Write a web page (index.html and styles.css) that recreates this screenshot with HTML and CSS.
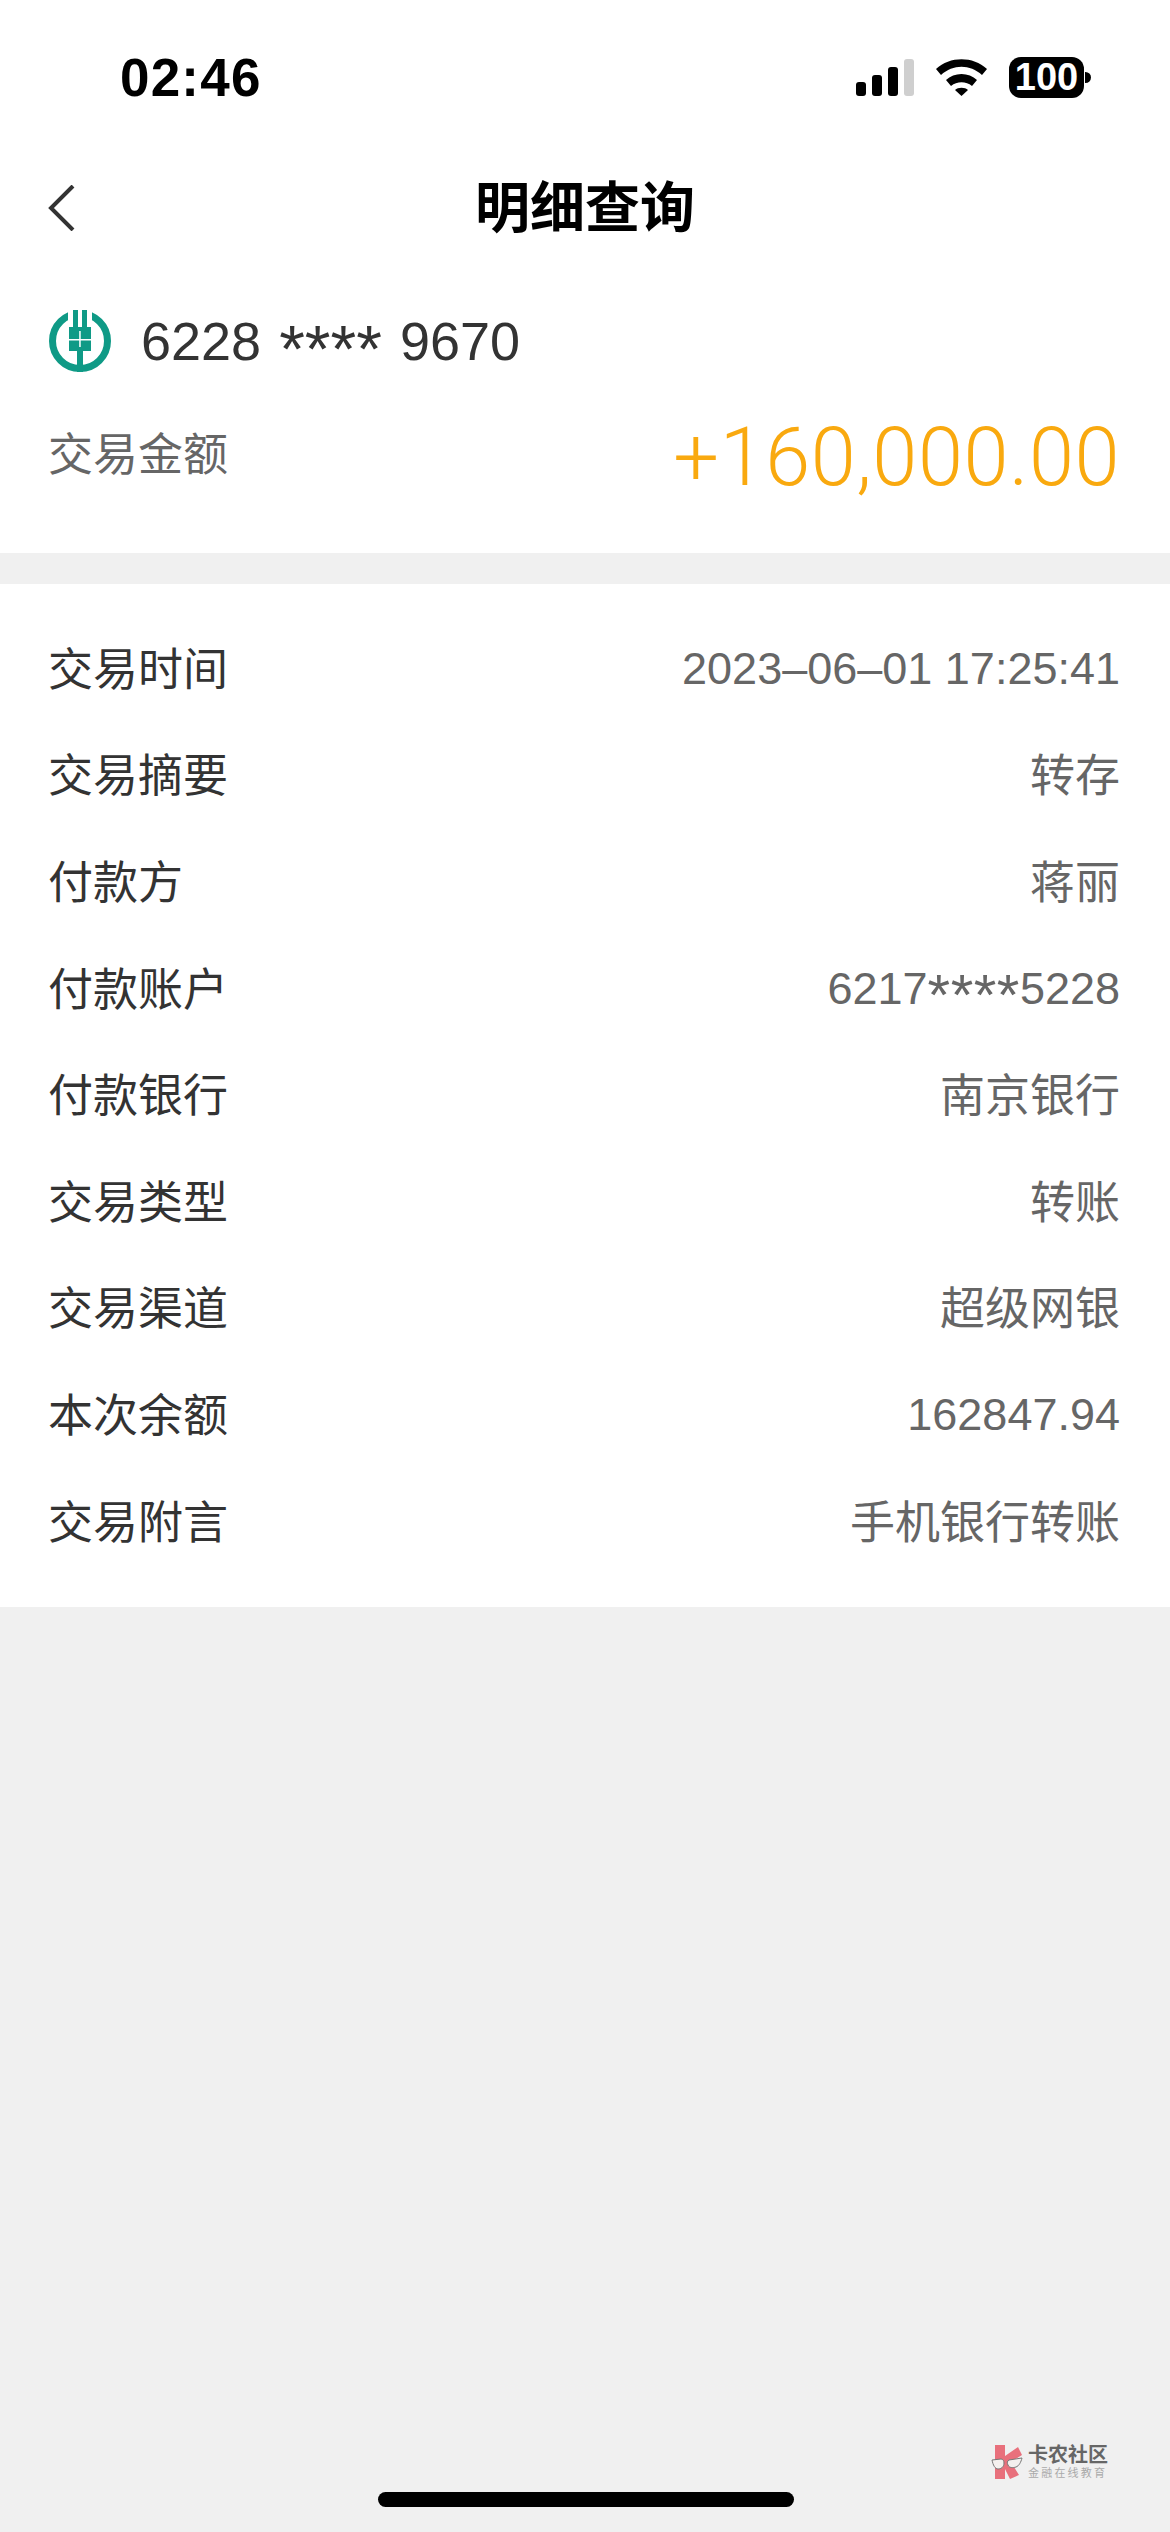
FILE: index.html
```html
<!DOCTYPE html>
<html lang="zh-CN">
<head>
  <meta charset="UTF-8">
  <meta name="viewport" content="width=device-width, initial-scale=1.0">
  <title>明细查询</title>
  <link rel="stylesheet" href="styles.css">
</head>
<body>
  <!-- Status bar -->
  <div class="status">
    <span class="clock">02:46</span>
    <div class="status-icons">
      <div class="signal">
        <span class="bar bar1"></span>
        <span class="bar bar2"></span>
        <span class="bar bar3"></span>
        <span class="bar bar4"></span>
      </div>
      <svg class="wifi" viewBox="0 0 51 37">
        <path d="M0 10C14-3 37-3 51 10L46 16C34 5 17 5 5 16Z"/>
        <path d="M10 21C18 13 33 13 41 21L36 27C30 22 21 22 15 27Z"/>
        <path d="M19 31C22 28 29 28 32 31L25.5 37Z"/>
      </svg>
      <div class="battery">
        <span class="battery-body">100</span>
        <span class="battery-nub"></span>
      </div>
    </div>
  </div>

  <!-- Nav bar -->
  <div class="nav">
    <svg class="back" viewBox="0 0 28 46">
      <path d="M25 1L3 23L25 45" fill="none" stroke="#333" stroke-width="4"/>
    </svg>
    <h1 class="title">明细查询</h1>
  </div>

  <!-- Amount card -->
  <div class="summary">
    <div class="card-line">
      <svg class="bank-logo" viewBox="0 0 62 62">
        <circle cx="31" cy="31" r="27.5" fill="none" stroke="#0f9a86" stroke-width="7"/>
        <rect x="19" y="0" width="24" height="18" fill="#fff"/>
        <rect x="24" y="0" width="14" height="18" fill="#0f9a86"/>
        <rect x="29" y="0" width="4" height="17" fill="#fff"/>
        <rect x="20" y="17" width="22" height="24" fill="#0f9a86"/>
        <rect x="28" y="41" width="6" height="21" fill="#0f9a86"/>
        <rect x="20" y="29" width="22" height="1.5" fill="#fff"/>
        <rect x="30.2" y="21" width="1.5" height="16" fill="#fff"/>
      </svg>
      <span class="card-number">6228 <span class="card-stars">****</span> 9670</span>
    </div>
    <div class="amount-line">
      <span class="amount-label">交易金额</span>
      <span class="amount">+160,000.00</span>
    </div>
  </div>

  <!-- Detail rows -->
  <div class="details">
    <div class="row"><span class="label">交易时间</span><span class="value num">2023–06–01 17:25:41</span></div>
    <div class="row"><span class="label">交易摘要</span><span class="value">转存</span></div>
    <div class="row"><span class="label">付款方</span><span class="value">蒋丽</span></div>
    <div class="row"><span class="label">付款账户</span><span class="value num">6217<span class="stars">****</span>5228</span></div>
    <div class="row"><span class="label">付款银行</span><span class="value">南京银行</span></div>
    <div class="row"><span class="label">交易类型</span><span class="value">转账</span></div>
    <div class="row"><span class="label">交易渠道</span><span class="value">超级网银</span></div>
    <div class="row"><span class="label">本次余额</span><span class="value num">162847.94</span></div>
    <div class="row"><span class="label">交易附言</span><span class="value">手机银行转账</span></div>
  </div>

  <!-- Forum watermark -->
  <div class="watermark">
    <svg class="mark-logo" viewBox="0 0 32 36">
      <path d="M4 1H14V12L27 3L31 11L20 18L28 31L19 35L14 25V35H4Z" fill="#e8707c"/>
      <path d="M1 16L10 15C12 15 13 17 13 19C13 23 10 25 7 25C4 25 2 21 1 16Z" fill="#f4f0ee" stroke="#777" stroke-width="1"/>
      <path d="M31 14L18 16C16 17 16 19 17 21C18 24 22 24 25 23C28 22 30 18 31 14Z" fill="#f4f0ee" stroke="#777" stroke-width="1"/>
    </svg>
    <div class="mark-text">
      <span class="mark-name">卡农社区</span>
      <span class="mark-sub">金融在线教育</span>
    </div>
  </div>

  <div class="home-bar"></div>
</body>
</html>
```

FILE: styles.css
```css
* {
  box-sizing: border-box;
}

body {
  margin: 0;
  min-height: 100vh;
  background: #f0f0f0;
  font-family: "Liberation Sans", "Noto Sans CJK SC", sans-serif;
  position: relative;
}

/* Status bar */
.status {
  height: 155px;
  background: #fff;
  display: flex;
  justify-content: space-between;
  align-items: center;
  padding: 0 79px 0 120px;
}

.clock {
  font-size: 53px;
  font-weight: 700;
  letter-spacing: 1.2px;
  color: #000;
}

.status-icons {
  display: flex;
  align-items: center;
  gap: 22px;
}

.signal {
  display: flex;
  align-items: flex-end;
  gap: 6px;
  height: 37px;
}

.bar {
  width: 10px;
  border-radius: 3px;
  background: #000;
}

.bar1 { height: 14px; }
.bar2 { height: 21px; }
.bar3 { height: 29px; }
.bar4 { height: 37px; background: #cfcfcf; }

.wifi {
  width: 51px;
  height: 37px;
}

.battery {
  display: flex;
  align-items: center;
  gap: 1px;
}

.battery-body {
  width: 75px;
  height: 41px;
  border-radius: 12px;
  background: #000;
  color: #fff;
  font-size: 38px;
  font-weight: 700;
  line-height: 41px;
  text-align: center;
}

.battery-nub {
  width: 6px;
  height: 11px;
  border-radius: 0 6px 6px 0;
  background: #000;
}

/* Nav bar */
.nav {
  height: 105px;
  background: #fff;
  display: flex;
  align-items: center;
  justify-content: center;
  padding-bottom: 9px;
  position: relative;
}

.back {
  position: absolute;
  left: 48px;
  top: 30px;
  width: 28px;
  height: 46px;
}

.title {
  margin: 0;
  font-size: 55px;
  font-weight: 700;
  color: #000;
}

/* Amount card */
.summary {
  height: 293px;
  background: #fff;
  padding: 50px 50px 0 48px;
}

.card-line {
  height: 62px;
  display: flex;
  align-items: center;
  gap: 30px;
  margin-left: 1px;
}

.bank-logo {
  width: 62px;
  height: 62px;
}

.card-number {
  font-size: 54px;
  line-height: 62px;
  word-spacing: 3px;
  color: #333;
}

.card-stars {
  font-size: 66px;
  line-height: 40px;
  vertical-align: -12px;
}

.amount-line {
  display: flex;
  justify-content: space-between;
  align-items: center;
  margin-top: 38px;
  height: 94px;
}

.amount-label {
  font-size: 45px;
  padding-bottom: 12px;
  color: #666;
}

.amount {
  font-family: Roboto, "Liberation Sans", sans-serif;
  font-size: 81px;
  font-weight: 300;
  letter-spacing: 0.6px;
  color: #f9a90f;
}

/* Detail rows */
.details {
  margin-top: 31px;
  height: 1023px;
  background: #fff;
  padding: 29px 50px 0 48px;
}

.row {
  height: 106.6px;
  display: flex;
  justify-content: space-between;
  align-items: center;
}

.label {
  font-size: 45px;
  color: #333;
}

.value {
  font-size: 45px;
  color: #666;
}

.num {
  padding-top: 5px;
}

.stars {
  font-size: 58px;
  line-height: 30px;
  letter-spacing: 0.5px;
  vertical-align: -11px;
}

/* Watermark */
.watermark {
  position: absolute;
  right: 62px;
  bottom: 52px;
  display: flex;
  align-items: center;
  gap: 5px;
}

.mark-logo {
  width: 32px;
  height: 36px;
}

.mark-text {
  display: flex;
  flex-direction: column;
}

.mark-name {
  font-size: 20px;
  line-height: 22px;
  font-weight: 700;
  color: #666;
}

.mark-sub {
  font-size: 11px;
  line-height: 14px;
  letter-spacing: 2.2px;
  color: #aaa;
}

.home-bar {
  position: absolute;
  left: 378px;
  bottom: 25px;
  width: 416px;
  height: 15px;
  border-radius: 8px;
  background: #000;
}
```
